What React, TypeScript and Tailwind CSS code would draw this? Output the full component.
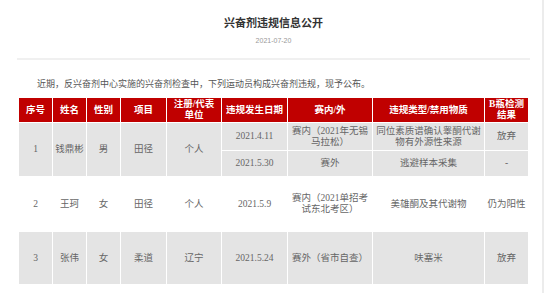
import React from "react";

const serif = { fontFamily: '"Liberation Serif", "Noto Sans CJK SC", serif' };

const th = "border border-white px-0.5 text-center font-semibold text-white leading-[11px]";
const td = "border border-white px-0.5 text-center leading-[11px] whitespace-nowrap";

export default function App() {
  return (
    <div className="h-[293px] w-[550px] overflow-hidden bg-white">
      <div className="h-full w-[544px] border-r-2 border-[#ececec] pl-[17px]" style={{ fontFamily: '"Noto Sans CJK SC", sans-serif' }}>
        <div className="w-[513px]">
          <h1 className="pt-[15px] text-center text-[11px] font-bold leading-[14px] text-[#333]">兴奋剂违规信息公开</h1>
          <div className="mt-[7px] text-center text-[7px] leading-[10px] text-[#999]" style={{ fontFamily: '"Liberation Sans", sans-serif' }}>
            2021-07-20
          </div>
          <div className="mt-[12px] h-[2px] bg-[#f0f0f0]" />
          <p className="mt-[18px] pl-[20px] text-[9px] leading-[12px] text-[#555]">
            近期，反兴奋剂中心实施的兴奋剂检查中，下列运动员构成兴奋剂违规，现予公布。
          </p>

          <table className="ml-px mt-[7px] w-[510px] table-fixed border-collapse text-[9.5px] text-[#666]" style={serif}>
            <colgroup>
              <col className="w-[34px]" />
              <col className="w-[34px]" />
              <col className="w-[34px]" />
              <col className="w-[46px]" />
              <col className="w-[55px]" />
              <col className="w-[66px]" />
              <col className="w-[85px]" />
              <col className="w-[112px]" />
              <col className="w-[44px]" />
            </colgroup>
            <thead>
              <tr className="h-[25px] bg-[#c00000]">
                <th className={th}>序号</th>
                <th className={th}>姓名</th>
                <th className={th}>性别</th>
                <th className={th}>项目</th>
                <th className={th}>
                  注册/代表
                  <br />
                  单位
                </th>
                <th className={th}>违规发生日期</th>
                <th className={th}>赛内/外</th>
                <th className={th}>违规类型/禁用物质</th>
                <th className={th}>
                  B瓶检测
                  <br />
                  结果
                </th>
              </tr>
            </thead>
            <tbody>
              <tr className="h-[28px] bg-[#e4e4e4]">
                <td rowSpan={2} className={td}>1</td>
                <td rowSpan={2} className={td}>钱鼎彬</td>
                <td rowSpan={2} className={td}>男</td>
                <td rowSpan={2} className={td}>田径</td>
                <td rowSpan={2} className={td}>个人</td>
                <td className={td}>2021.4.11</td>
                <td className={td}>
                  赛内（2021年无锡
                  <br />
                  马拉松）
                </td>
                <td className={td}>
                  同位素质谱确认睾酮代谢
                  <br />
                  物有外源性来源
                </td>
                <td className={td}>放弃</td>
              </tr>
              <tr className="h-[26px] bg-[#e4e4e4]">
                <td className={td}>2021.5.30</td>
                <td className={td}>赛外</td>
                <td className={td}>逃避样本采集</td>
                <td className={td}>-</td>
              </tr>
              <tr className="h-[55px] bg-white">
                <td className={td}>2</td>
                <td className={td}>王珂</td>
                <td className={td}>女</td>
                <td className={td}>田径</td>
                <td className={td}>个人</td>
                <td className={td}>2021.5.9</td>
                <td className={td}>
                  赛内（2021单招考
                  <br />
                  试东北考区）
                </td>
                <td className={td}>美雄酮及其代谢物</td>
                <td className={td}>仍为阳性</td>
              </tr>
              <tr className="h-[53px] bg-[#e4e4e4]">
                <td className={td}>3</td>
                <td className={td}>张伟</td>
                <td className={td}>女</td>
                <td className={td}>柔道</td>
                <td className={td}>辽宁</td>
                <td className={td}>2021.5.24</td>
                <td className={td}>赛外（省市自查）</td>
                <td className={td}>呋塞米</td>
                <td className={td}>放弃</td>
              </tr>
            </tbody>
          </table>
        </div>
      </div>
    </div>
  );
}
